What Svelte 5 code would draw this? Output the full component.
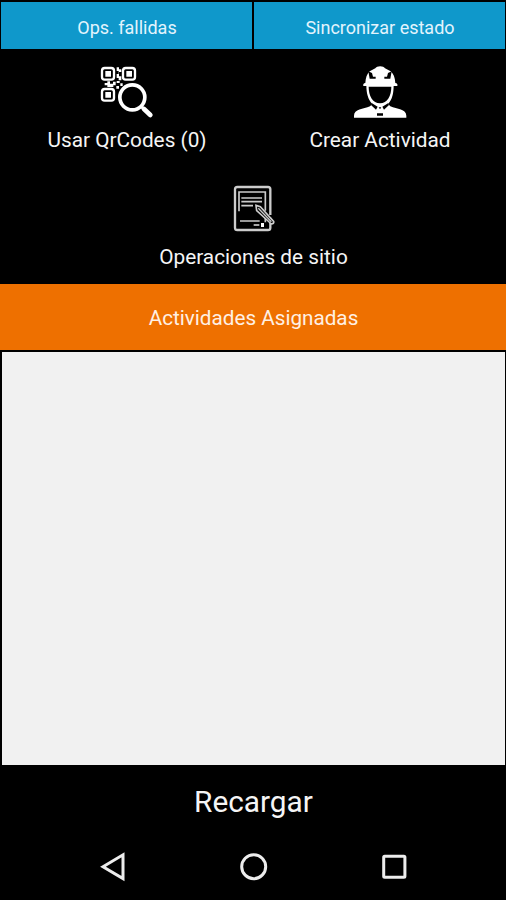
<script lang="ts">
	let { qrCount = 0 }: { qrCount?: number } = $props();
</script>

<div class="screen">
	<div class="tabs">
		<button class="tab">Ops. fallidas</button>
		<button class="tab">Sincronizar estado</button>
	</div>

	<div class="actions">
		<button class="action">
			<svg width="73" height="65" viewBox="0 0 219 195" fill="none" stroke="#fff">
				<g stroke-width="7">
					<rect x="36" y="30" width="36" height="35" rx="8"/>
					<rect x="99" y="30" width="36" height="35" rx="8"/>
					<rect x="36" y="93" width="36" height="35" rx="8"/>
				</g>
				<g fill="#fff" stroke="none">
					<path d="M46 39h17v17H46zM109 39h17v17h-17zM46 102h17v17H46z"/>
					<path d="M80 28h7v6h7v8h-7v13h7v12h-8v-7h-6V48h6v-9h-6zM44 75h8v-5h8v7h9v-6h8v11h-7v5H52v-5h-8zM80 69h9v6h-9zM91 76h7v8h-7zM79 84h8v8h-8z"/>
				</g>
				<circle cx="127" cy="118" r="37.5" stroke-width="11"/>
				<path d="M154 146l12 11" stroke-width="9"/>
				<path d="M162 153l19 18" stroke-width="14" stroke-linecap="round"/>
			</svg>
			<span>Usar QrCodes ({qrCount})</span>
		</button>

		<button class="action">
			<svg width="69" height="65" viewBox="0 0 207 195" fill="#fff">
				<path d="M55 84q-2-8 6-9c1-16 5-27 13-35l17-9c4-8 25-8 29 0l17 9c9 8 13 19 14 35q8 1 6 9z"/>
				<path d="M64 82h82c0 23-4 43-17 56l7 7c20 8 48 9 48 28v6H27v-6c0-19 28-20 48-28l7-7C69 125 64 105 64 82z"/>
				<path class="cut" d="M70 40l11 5 3 11h8v6H74zM140 40l-11 5-3 11h-8v6h18zM71 86h68c0 27-12 50-34 50S71 113 71 86zM81 136l17 10-5 9-15-14zM129 136l-17 10 5 9 15-14zM96 166h18v7H96zM101 148h8l-4 6z"/>
			</svg>
			<span>Crear Actividad</span>
		</button>

		<button class="action wide">
			<svg width="66" height="60" viewBox="0 0 198 180" fill="none" stroke="#ccc" stroke-width="5">
				<path d="M151 119v30q0 7-7 7H52q-7 0-7-7V34q0-7 7-7h92q7 0 7 7v77" stroke-width="7"/>
				<path d="M57 100V42h79v56M136 118v15M60 129h59"/>
				<path d="M64 60h62M64 71h62M64 83h35" stroke-width="5"/>
				<path d="M101 141h17" stroke-width="5"/>
				<rect x="123" y="135" width="9" height="12" fill="#fff" stroke="none"/>
				<path class="pen" d="M108 82l13 4 40 44q2 7-7 8l-44-40z" stroke-width="5"/>
				<path d="M115 91l39 40" stroke-width="4"/>
			</svg>
			<span>Operaciones de sitio</span>
		</button>
	</div>

	<div class="title">Actividades Asignadas</div>
	<div class="list"></div>
	<button class="reload">Recargar</button>

	<div class="navbar">
		<svg width="28" height="34" viewBox="0 0 28 34"><path d="M4 16.7L24 4.8v23.8z"/></svg>
		<svg width="28" height="34" viewBox="0 0 28 34"><circle cx="13.7" cy="16.7" r="12"/></svg>
		<svg width="28" height="34" viewBox="0 0 28 34"><rect x="3.7" y="6.3" width="21.2" height="21" rx="1"/></svg>
	</div>
</div>

<style>
	:global(body) {
		background: #000;
	}
	.screen {
		display: flex;
		flex-direction: column;
		width: 506px;
		height: 900px;
		background: #000;
		color: #f5f5f5;
		font-family: Roboto, sans-serif;
	}
	button {
		margin: 0;
		padding: 0;
		border: none;
		background: none;
		color: inherit;
		font-family: inherit;
		cursor: pointer;
	}
	.tabs {
		display: grid;
		grid-template-columns: 1fr 1fr;
		gap: 2px;
		height: 47px;
		padding: 2px 1px 1px;
	}
	.tab {
		padding: 4px 0 0 1px;
		background: #0f98cb;
		color: #e3f4fd;
		font-size: 18px;
		line-height: 43px;
	}
	.actions {
		display: grid;
		grid-template-columns: 1fr 1fr;
		grid-template-rows: 120px 106px;
		padding-top: 8px;
	}
	.action {
		display: flex;
		flex-direction: column;
		align-items: center;
		font-size: 20.8px;
		line-height: 34px;
	}
	.action span {
		padding-left: 1px;
	}
	.wide {
		grid-column: 1 / 3;
	}
	.wide span {
		margin-top: 2px;
	}
	.cut, .pen {
		fill: #000;
	}
	.title {
		height: 66px;
		padding-left: 1px;
		background: #ee7000;
		color: #fff0e4;
		font-size: 20.7px;
		line-height: 68px;
		text-align: center;
	}
	.list {
		height: 413px;
		margin: 2px 1px 0 2px;
		background: #f1f1f1;
	}
	.reload {
		height: 72px;
		padding: 2px 0 0 1px;
		font-size: 29.8px;
		line-height: 70px;
	}
	.navbar {
		display: flex;
		justify-content: space-between;
		margin-top: 13px;
		padding: 0 98px 0 99px;
	}
	.navbar svg {
		fill: none;
		stroke: #ededed;
		stroke-width: 3;
	}
</style>
